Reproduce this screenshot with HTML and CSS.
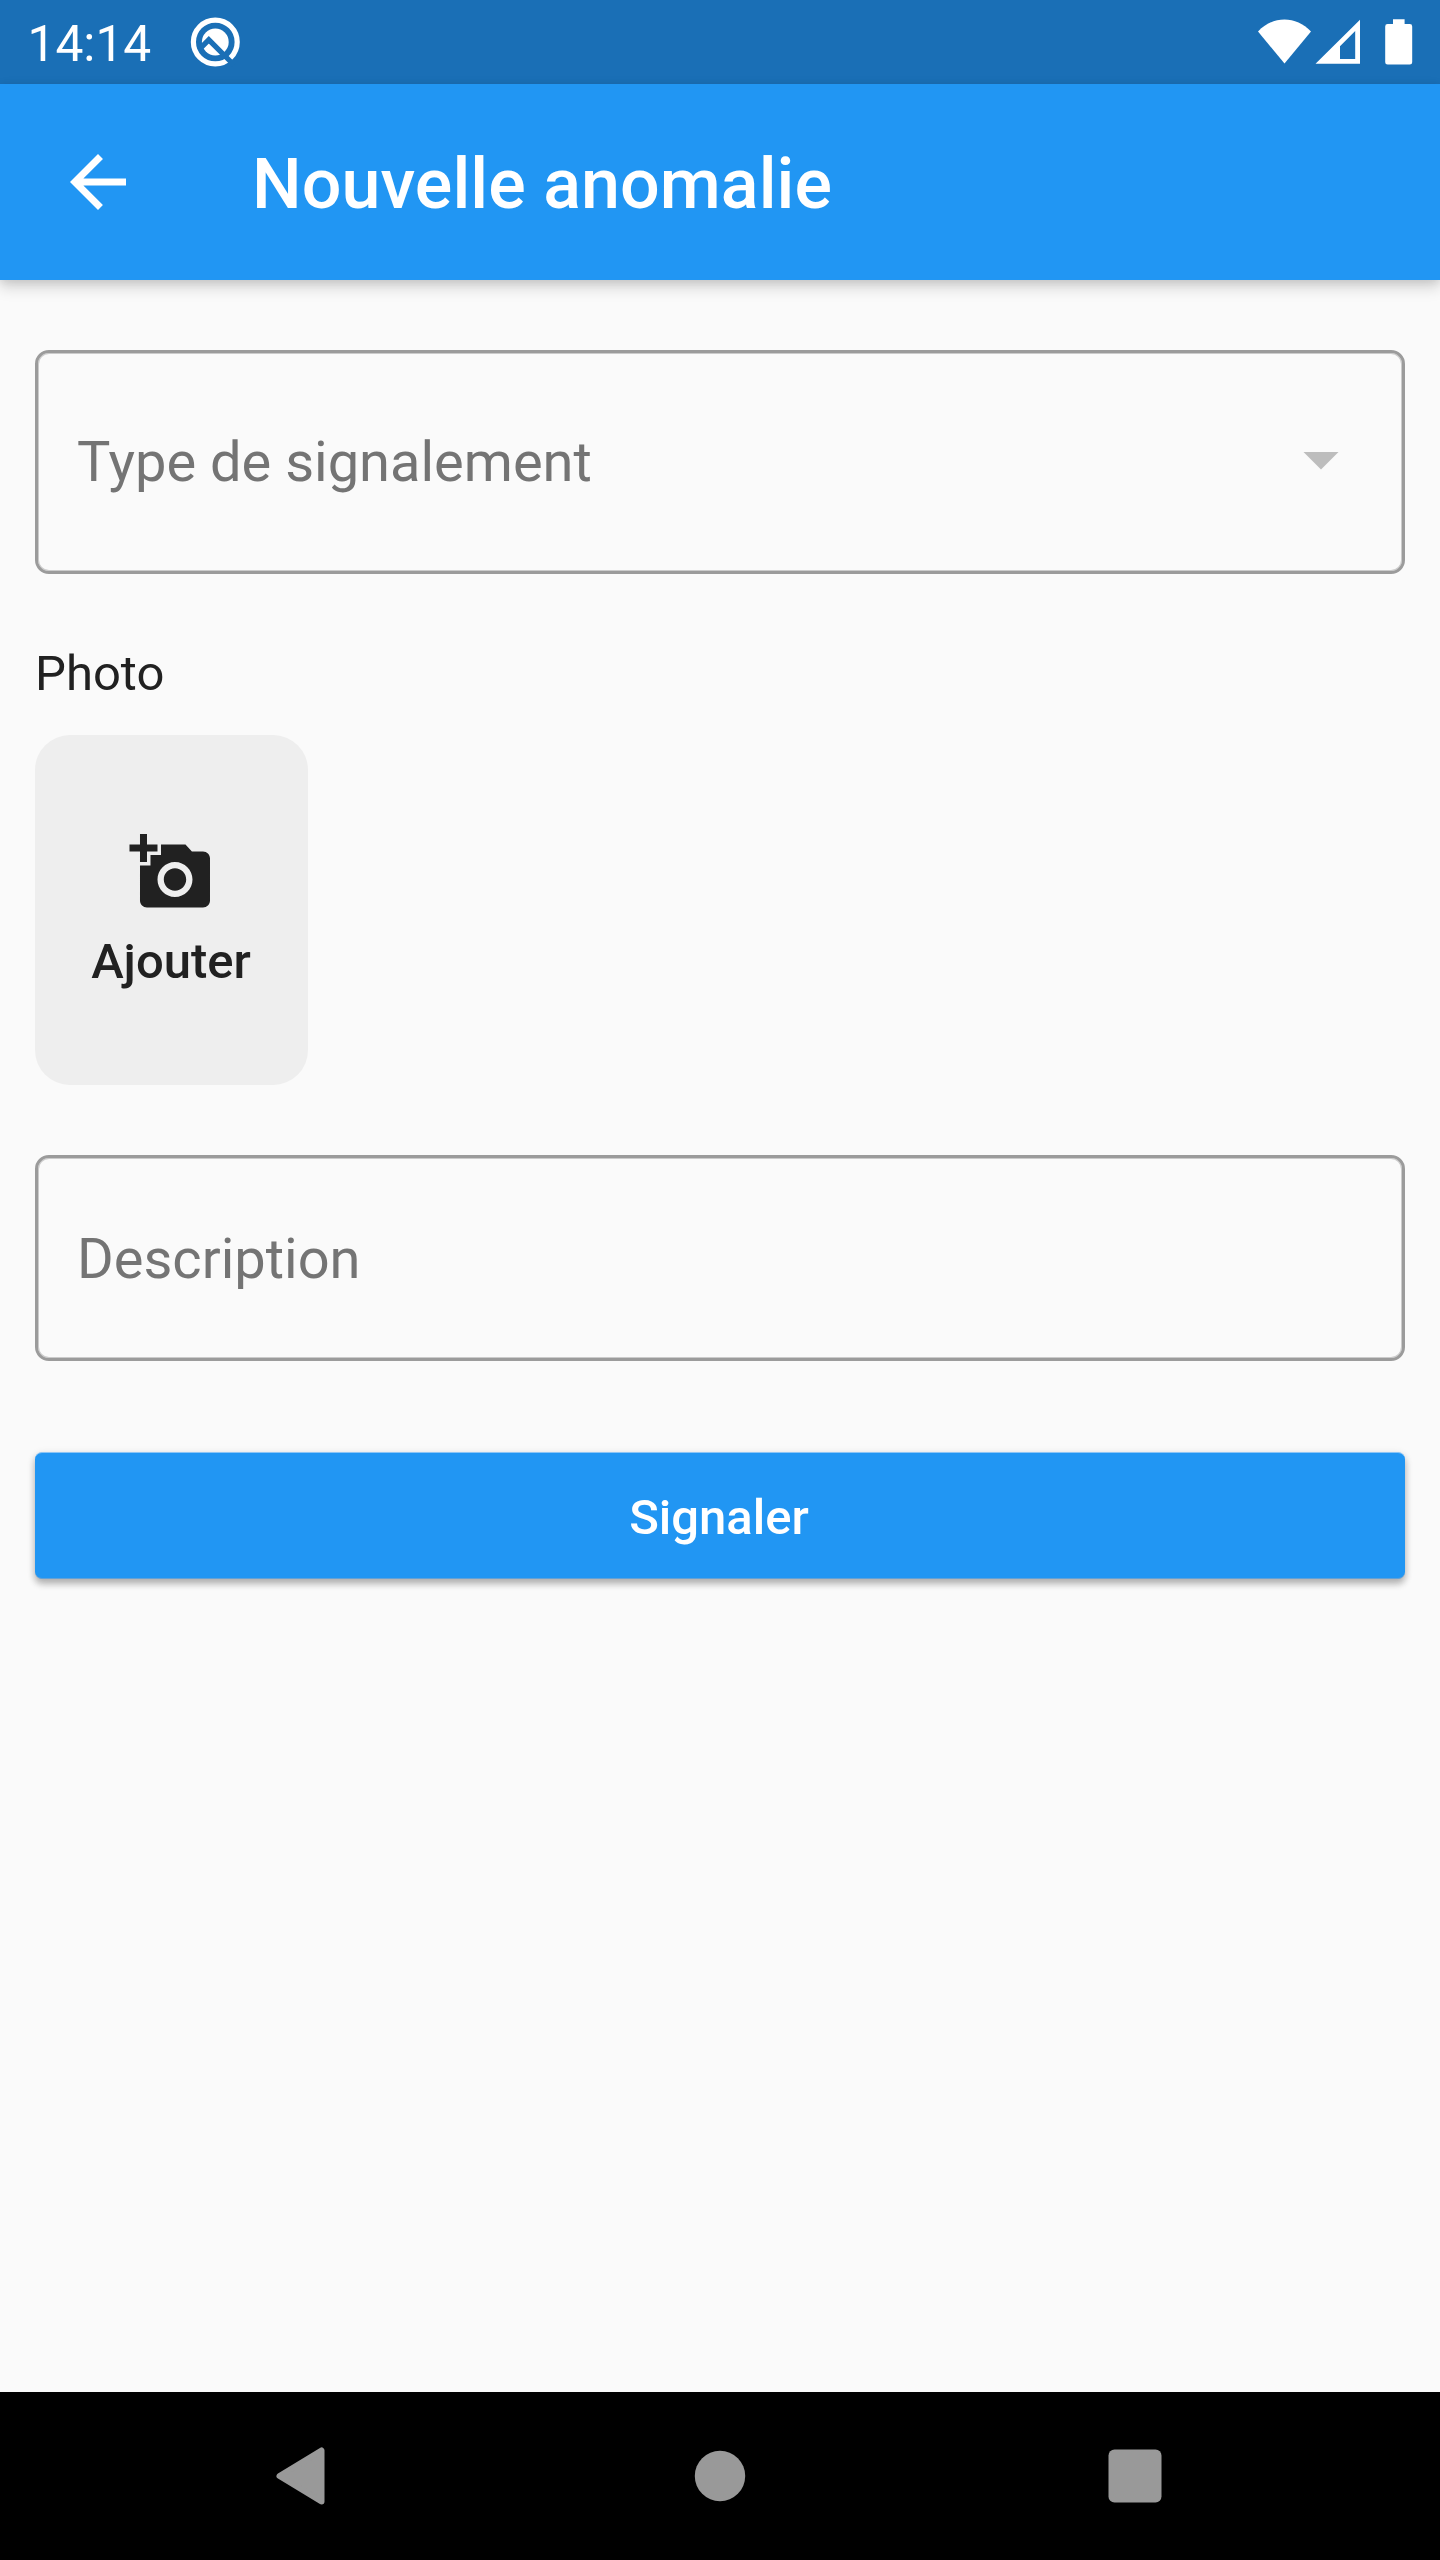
FILE: index.html
```html
<!DOCTYPE html>
<html lang="fr">
<head>
<meta charset="utf-8">
<title>Nouvelle anomalie</title>
<link rel="stylesheet" href="styles.css">
</head>
<body>
<div class="screen">
  <div class="status-bar">
    <span class="clock">14:14</span>
    <svg class="status-logo" viewBox="0 0 50 50" aria-hidden="true">
      <circle cx="25.3" cy="25" r="21.9" fill="none" stroke="#fff" stroke-width="5.2"/>
      <circle cx="25.3" cy="25" r="13.4" fill="#fff"/>
      <path d="M9 32.6L18.8 22.8L44 48" fill="none" stroke="#1a6fb6" stroke-width="5.2"/>
    </svg>
    <svg class="status-icons" viewBox="0 0 160 50" aria-hidden="true">
      <path d="M3 14.5C18 -1.5 41 -1.5 56 14.5L29.5 46.5z" fill="#fff"/>
      <path d="M60.5 46.7L105 2.7V46.7zM85 29.2V42H100.2V14z" fill="#fff" fill-rule="evenodd"/>
      <path d="M138 2.2h11.6V7h5.2a2.4 2.4 0 0 1 2.4 2.4v35.8a2.4 2.4 0 0 1-2.4 2.4h-22.2a2.4 2.4 0 0 1-2.4-2.4V9.4a2.4 2.4 0 0 1 2.4-2.4h5.4z" fill="#fff"/>
    </svg>
  </div>
  <header class="app-bar">
    <svg class="icon" viewBox="0 0 24 24" aria-label="Retour"><path d="M20 11H7.83l5.59-5.59L12 4l-8 8 8 8 1.41-1.41L7.83 13H20v-2z" fill="#fff"/></svg>
    <h1 class="title">Nouvelle anomalie</h1>
  </header>
  <main class="form">
    <div class="field field-select">
      <span>Type de signalement</span>
      <svg class="icon" viewBox="0 0 24 24" aria-hidden="true"><path d="M7 10l5 5 5-5z" fill="#bdbdbd"/></svg>
    </div>
    <div class="label">Photo</div>
    <div class="photo-tile">
      <svg class="icon" viewBox="-0.14 -0.14 24 24" aria-hidden="true"><path fill="#212121" d="M3 4V1h2v3h3v2H5v3H3V6H0V4h3zm3 6V7h3V4h7l1.83 2H21c1.1 0 2 .9 2 2v12c0 1.1-.9 2-2 2H5c-1.1 0-2-.9-2-2V10h3zm7 9c2.76 0 5-2.24 5-5s-2.24-5-5-5-5 2.24-5 5 2.24 5 5 5zm-3.2-5c0 1.77 1.43 3.2 3.2 3.2s3.2-1.43 3.2-3.2-1.43-3.2-3.2-3.2-3.2 1.43-3.2 3.2z"/></svg>
      <span>Ajouter</span>
    </div>
    <div class="field field-text"><span>Description</span></div>
    <button class="submit">Signaler</button>
  </main>
  <nav class="nav-bar">
    <svg class="nav-icon" viewBox="0 0 60 60" aria-hidden="true"><path d="M4.5 30L46.5 4.5V55.5z" fill="#999" stroke="#999" stroke-width="6" stroke-linejoin="round"/></svg>
    <svg class="nav-icon" viewBox="0 0 60 60" aria-hidden="true"><circle cx="30" cy="30" r="25.2" fill="#999"/></svg>
    <svg class="nav-icon" viewBox="0 0 60 60" aria-hidden="true"><rect x="3.5" y="3.5" width="53" height="53" rx="6" fill="#999"/></svg>
  </nav>
</div>
</body>
</html>
```

FILE: styles.css
```css
* { box-sizing: border-box; }

body {
  margin: 0;
  background: #fafafa;
  font-family: Roboto, sans-serif;
  color: #212121;
}

.screen {
  display: flex;
  flex-direction: column;
  width: 1440px;
  height: 2560px;
  background: #fafafa;
}

.icon {
  display: block;
  flex: none;
  width: 84px;
  height: 84px;
}

.status-bar {
  display: flex;
  align-items: flex-start;
  height: 84px;
  padding: 17px 25px 0 27.5px;
  background: #1a6fb6;
  color: #fff;
}

.clock {
  width: 162.5px;
  font-size: 49.7px;
  line-height: 54px;
}

.status-logo {
  width: 50px;
  height: 50px;
}

.status-icons {
  width: 160px;
  height: 50px;
  margin-left: auto;
}

.app-bar {
  display: flex;
  align-items: center;
  gap: 112px;
  height: 196px;
  padding-left: 56px;
  background: #2196f3;
  color: #fff;
  box-shadow: 0 7px 14px rgba(0, 0, 0, .17), 0 2px 8px rgba(0, 0, 0, .08);
}

.title {
  margin: 0;
  padding-top: 4px;
  font-size: 70px;
  font-weight: 500;
  line-height: 82px;
  letter-spacing: .06px;
}

.form {
  display: flex;
  flex: 1;
  flex-direction: column;
  padding: 70px 35px 0;
}

.field {
  display: flex;
  align-items: center;
  justify-content: space-between;
  padding: 0 39px;
  border: 3px solid #9b9b9b;
  border-radius: 14px;
  box-shadow: inset 0 0 0 1px #cbcbcb;
  color: #747474;
  font-size: 56px;
  line-height: 66px;
}

.field-select {
  height: 224px;
  padding-bottom: 6px;
}

.field-select span { padding-top: 6px; }

.field-text {
  height: 206px;
  margin-top: 70px;
}

.field-text span { padding-top: 2px; }

.label {
  height: 90px;
  margin-top: 71px;
  font-size: 49px;
  line-height: 58px;
}

.photo-tile {
  display: flex;
  flex-direction: column;
  align-items: center;
  gap: 19px;
  width: 273px;
  height: 350px;
  padding: 95px 1px 0 0;
  border-radius: 35px;
  background: #eee;
  font-size: 49px;
  font-weight: 500;
  line-height: 58px;
}

.submit {
  height: 127px;
  margin-top: 91px;
  padding: 5px 2px 0 0;
  border: 0 solid #8cc5f6;
  border-width: 1px 0;
  border-bottom-color: #63a1d6;
  border-radius: 7px;
  background: #2196f3;
  box-shadow: 0 5px 7px rgba(0, 0, 0, .24), 0 2px 8px rgba(0, 0, 0, .12);
  color: #fff;
  font: 500 49px/58px Roboto, sans-serif;
}

.nav-bar {
  display: flex;
  justify-content: center;
  align-items: center;
  gap: 355px;
  height: 168px;
  background: #000;
}

.nav-icon {
  width: 60px;
  height: 60px;
}
```
